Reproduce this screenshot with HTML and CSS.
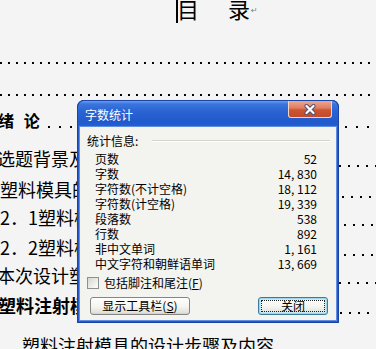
FILE: index.html
```html
<!DOCTYPE html>
<html lang="zh-CN">
<head>
    <meta charset="UTF-8">
    <meta name="viewport" content="width=device-width, initial-scale=1.0">
    <title>字数统计</title>
    <link rel="stylesheet" href="styles.css">
</head>
<body>
    <div class="page">
        <div class="doc-title">
            <span class="caret"></span><span class="t1">目</span><span class="t2">录</span><span class="para-mark">↵</span>
        </div>

        <div class="row row-blank1"><span class="leader leader-fine"></span></div>
        <div class="row row-blank2"><span class="leader leader-fine"></span></div>
        <div class="row row-ch1"><span class="text heading chapter">绪 论</span><span class="leader leader-bold"></span></div>
        <div class="row row-s1"><span class="text shift3">选题背景及意义</span><span class="leader"></span></div>
        <div class="row row-s2"><span class="text">塑料模具的发展</span><span class="leader"></span></div>
        <div class="row row-s3"><span class="text">2．1塑料模具</span><span class="leader"></span></div>
        <div class="row row-s4"><span class="text">2．2塑料模具</span><span class="leader"></span></div>
        <div class="row row-s5"><span class="text shift3">本次设计塑料</span><span class="leader"></span></div>
        <div class="row row-ch2"><span class="text heading shift2">塑料注射模具</span><span class="leader"></span></div>
        <div class="row row-sub"><span class="text">塑料注射模具的设计步骤及内容</span></div>

        <div class="dialog">
            <div class="titlebar">
                <span class="title">字数统计</span>
                <span class="close-btn">
                    <svg width="14" height="11" viewBox="0 0 14 11">
                        <path d="M3.5 2 L10.5 9 M10.5 2 L3.5 9" stroke="#4b4f7a" stroke-width="4" stroke-linecap="round" fill="none"/>
                        <path d="M3.5 2 L10.5 9 M10.5 2 L3.5 9" stroke="#ffffff" stroke-width="2.2" stroke-linecap="round" fill="none"/>
                    </svg>
                </span>
            </div>
            <div class="client">
                <div class="info-label">
                    <span>统计信息:</span>
                    <span class="etched"></span>
                </div>
                <ul class="stats">
                    <li><span>页数</span><span>52</span></li>
                    <li><span>字数</span><span>14, 830</span></li>
                    <li><span>字符数(不计空格)</span><span>18, 112</span></li>
                    <li><span>字符数(计空格)</span><span>19, 339</span></li>
                    <li><span>段落数</span><span>538</span></li>
                    <li><span>行数</span><span>892</span></li>
                    <li><span>非中文单词</span><span>1, 161</span></li>
                    <li><span>中文字符和朝鲜语单词</span><span>13, 669</span></li>
                </ul>
                <div class="check-row">
                    <span class="check"></span>
                    <span class="check-label">包括脚注和尾注(<u>F</u>)</span>
                </div>
                <div class="buttons">
                    <span class="btn btn-toolbar">显示工具栏(<u>S</u>)</span>
                    <span class="btn btn-default"><span class="focus">关闭</span></span>
                </div>
            </div>
        </div>
    </div>
</body>
</html>
```

FILE: styles.css
```css
* {
    box-sizing: border-box;
}
body {
    margin: 0;
    background-color: #f4f4f4;
    font-family: "Noto Sans CJK SC", sans-serif;
    color: #000;
}
.page {
    position: relative;
    width: 376px;
    height: 349px;
    overflow: hidden;
}

/* document behind the dialog */
.doc-title {
    display: flex;
    align-items: flex-start;
    height: 30px;
    padding-left: 176px;
    font-size: 22px;
    line-height: 22px;
    margin-top: -3px;
}
.caret {
    width: 2px;
    height: 26px;
    margin-right: -1px;
    background-color: #000;
}
.t2 {
    margin-left: 29px;
}
.para-mark {
    margin-top: 10px;
    margin-left: 1px;
    font-family: "DejaVu Sans", sans-serif;
    font-size: 8px;
    line-height: 8px;
    color: #808080;
}
.row {
    display: flex;
    align-items: flex-end;
    white-space: nowrap;
}
.row-blank1 { height: 37px; }
.row-blank2 { height: 32px; }
.row-ch1 { height: 32px; }
.row-s1 { height: 39px; }
.row-s2 { height: 31px; }
.row-s3 { height: 28px; }
.row-s4 { height: 30px; }
.row-s5 { height: 28px; }
.row-ch2 { height: 30px; }
.row-sub {
    height: 35px;
    align-items: flex-start;
    padding: 22px 0 0 22px;
}
.text {
    flex: none;
    font-size: 18px;
    line-height: 18px;
}
.heading {
    font-weight: bold;
}
.chapter {
    font-size: 16px;
    line-height: 16px;
    word-spacing: 6px;
    margin-left: -2px;
    margin-right: 8px;
}
.shift3 {
    margin-left: -3px;
}
.shift2 {
    margin-left: -2px;
}
.leader {
    flex: 1;
    height: 2px;
    background-image: linear-gradient(to right, #000 2px, transparent 2px);
    background-size: 9px 2px;
    background-repeat: repeat-x;
}
.leader-fine {
    background-size: 8px 2px;
}
.leader-bold {
    background-size: 11px 2px;
}

/* word count dialog */
.dialog {
    position: absolute;
    left: 77px;
    top: 100px;
    width: 262px;
    height: 223px;
    display: flex;
    flex-direction: column;
    background-color: #2458cb;
    border-radius: 7px 7px 0 0;
    box-shadow: inset 0 0 0 1px #1b44a8;
    overflow: hidden;
    font-size: 12px;
}
.titlebar {
    display: flex;
    justify-content: space-between;
    align-items: flex-start;
    height: 27px;
    background: linear-gradient(180deg, #6a9cef 0, #3a74dc 3px, #2a64d3 40%, #1f59cc 80%, #2660d2 100%);
    border-radius: 7px 7px 0 0;
    border: 1px solid #1b44a8;
    border-bottom: none;
}
.title {
    padding: 7px 0 0 7px;
    line-height: 14px;
    color: #fff;
}
.close-btn {
    display: flex;
    justify-content: center;
    align-items: center;
    width: 44px;
    height: 17px;
    margin: 0 6px 0 0;
    border: 1px solid #f2d4c8;
    border-top: none;
    border-radius: 0 0 3px 3px;
    background: linear-gradient(180deg, #eba88f 0%, #df7c5e 45%, #cd5632 55%, #c44a2a 100%);
}
.client {
    flex: 1;
    margin: 0 3px 3px;
    padding: 6px 0 0 7px;
    background-color: #f3f3ef;
    box-shadow: 0 0 0 1px #5f8de0;
}
.info-label {
    display: flex;
    align-items: center;
    height: 15px;
    line-height: 15px;
}
.etched {
    flex: 1;
    height: 2px;
    margin: 0 6px 0 14px;
    border-top: 1px solid #d5d4ca;
    border-bottom: 1px solid #fff;
}
.stats {
    list-style: none;
    margin: 3px 19px 0 8px;
    padding: 0;
}
.stats li {
    display: flex;
    justify-content: space-between;
    height: 15px;
    line-height: 15px;
}
.check-row {
    display: flex;
    align-items: center;
    height: 15px;
    margin-top: 4px;
}
.check {
    width: 12px;
    height: 12px;
    border: 1px solid #8e8f8f;
    background: linear-gradient(135deg, #d6d6ce, #f6f6f3 80%);
}
.check-label {
    margin-left: 5px;
    line-height: 15px;
}
.buttons {
    display: flex;
    margin-top: 7px;
    padding: 0 8px 0 3px;
}
.btn {
    height: 18px;
    border: 1px solid #858585;
    border-radius: 3px;
    background: linear-gradient(180deg, #ffffff 0%, #f4f4f0 55%, #e2e2dc 90%, #cfcfc8 100%);
    line-height: 16px;
    text-align: center;
}
.btn-toolbar {
    width: 100px;
}
.btn-default {
    width: 70px;
    margin-left: auto;
    border-color: #3c7b9b;
    box-shadow: inset 0 0 0 1px #9fd6ec, inset 0 0 0 2px #c8e8f4;
    padding: 2px;
}
.focus {
    display: block;
    height: 12px;
    border: 1px dotted #222;
    line-height: 10px;
}
```
